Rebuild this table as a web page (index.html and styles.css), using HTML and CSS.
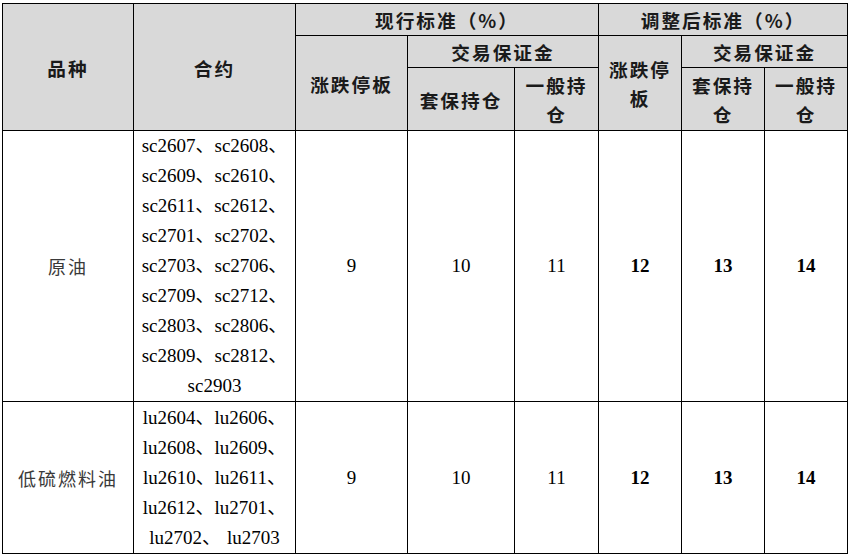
FILE: index.html
```html
<!DOCTYPE html>
<html lang="zh-CN">
<head>
<meta charset="utf-8">
<title>调整标准</title>
<link rel="stylesheet" href="styles.css">
</head>
<body>
<table class="grid">
  <colgroup>
    <col class="c-kind">
    <col class="c-contract">
    <col class="c-limit">
    <col class="c-hedge">
    <col class="c-general">
    <col class="c-n">
    <col class="c-n">
    <col class="c-n">
  </colgroup>
  <thead>
    <tr class="h1">
      <th rowspan="3">品种</th>
      <th rowspan="3">合约</th>
      <th colspan="3">现行标准（%）</th>
      <th colspan="3">调整后标准（%）</th>
    </tr>
    <tr class="h2">
      <th rowspan="2">涨跌停板</th>
      <th colspan="2">交易保证金</th>
      <th rowspan="2">涨跌停板</th>
      <th colspan="2">交易保证金</th>
    </tr>
    <tr class="h3">
      <th>套保持仓</th>
      <th>一般持仓</th>
      <th>套保持仓</th>
      <th>一般持仓</th>
    </tr>
  </thead>
  <tbody>
    <tr class="r1">
      <td class="kind">原油</td>
      <td class="contract">sc2607、sc2608、<br>sc2609、sc2610、<br>sc2611、sc2612、<br>sc2701、sc2702、<br>sc2703、sc2706、<br>sc2709、sc2712、<br>sc2803、sc2806、<br>sc2809、sc2812、<br>sc2903</td>
      <td>9</td>
      <td>10</td>
      <td>11</td>
      <td class="new">12</td>
      <td class="new">13</td>
      <td class="new">14</td>
    </tr>
    <tr class="r2">
      <td class="kind">低硫燃料油</td>
      <td class="contract">lu2604、lu2606、<br>lu2608、lu2609、<br>lu2610、lu2611、<br>lu2612、lu2701、<br>lu2702<span class="sep">、</span>lu2703</td>
      <td>9</td>
      <td>10</td>
      <td>11</td>
      <td class="new">12</td>
      <td class="new">13</td>
      <td class="new">14</td>
    </tr>
  </tbody>
</table>
</body>
</html>
```

FILE: styles.css
```css
html, body {
  margin: 0;
  padding: 0;
  background: #ffffff;
}

body {
  padding: 3px 0 0 2px;
}

.grid {
  border-collapse: collapse;
  table-layout: fixed;
  width: 846px;
  font-family: "Liberation Serif", "Noto Sans CJK SC", serif;
  font-size: 19px;
  color: #000;
}

.c-kind { width: 131px; }
.c-contract { width: 162px; }
.c-limit { width: 112px; }
.c-hedge { width: 107px; }
.c-general { width: 84px; }
.c-n { width: 83px; }

.grid th,
.grid td {
  border: 1px solid #000;
  padding: 0 4px;
  text-align: center;
  vertical-align: middle;
  line-height: 30px;
}

.grid th {
  background: #d9d9d9;
  font-family: "Noto Sans CJK SC", sans-serif;
  font-weight: 600;
  font-size: 18.67px;
  letter-spacing: 2px;
  line-height: 29px;
  color: #1a1a1a;
}

.h1 { height: 32px; }
.h2 { height: 32px; }
.h3 { height: 63px; }

.r1 { height: 270px; }
.r2 { height: 152px; }

.kind {
  font-family: "Noto Sans CJK SC", sans-serif;
  font-size: 18px;
  letter-spacing: 2px;
  color: #3a3a3a;
}

.contract {
  white-space: nowrap;
  padding: 0;
}

.sep {
  margin-right: 6px;
}

.new {
  font-weight: bold;
}
```
